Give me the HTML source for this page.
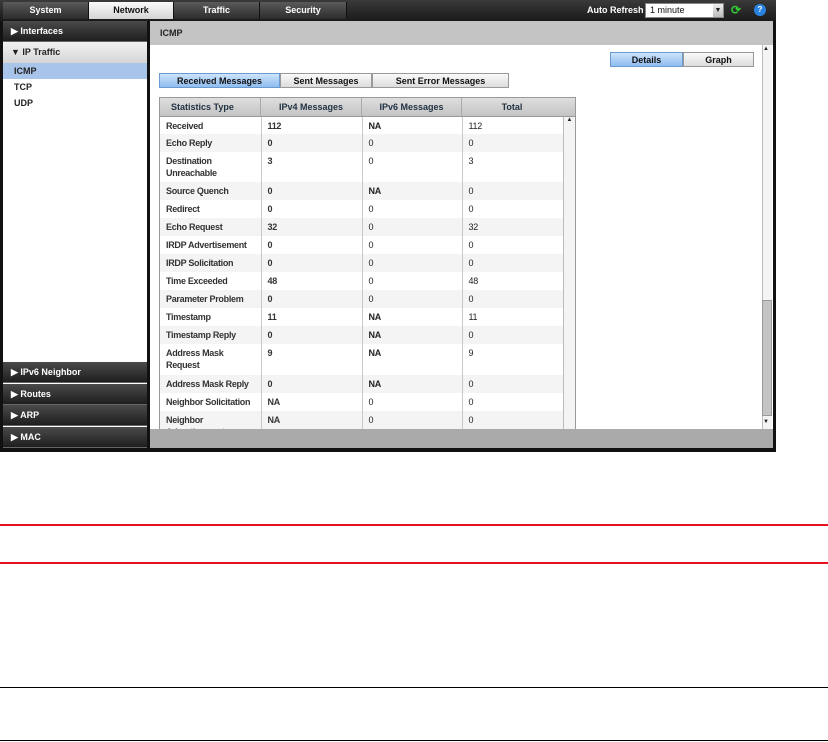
<!DOCTYPE html>
<html><head><meta charset="utf-8"><style>
*{margin:0;padding:0;box-sizing:border-box}
body{width:828px;height:742px;background:#fff;position:relative;font-family:"Liberation Sans",sans-serif;font-size:9px;color:#222;overflow:hidden}
.a{position:absolute}
.tab{position:absolute;top:2px;height:17px;color:#fff;font-weight:bold;text-align:center;line-height:17px;background:linear-gradient(#5a5a5a,#2c2c2c);border-right:1px solid #111}
.nav{position:absolute;left:3px;width:144px;height:21px;color:#fff;font-weight:bold;line-height:20px;padding-left:8px;background:linear-gradient(#4a4a4a,#1e1e1e);border-bottom:1px solid #666}
.btn{position:absolute;height:15px;line-height:14px;text-align:center;font-weight:bold;color:#111;border:1px solid #999;background:linear-gradient(#fafafa,#dcdcdc)}
.btn.on{background:linear-gradient(#cde3fb,#8fbdf0);border-color:#6a9ad0}
table{border-collapse:collapse;font-size:9px;table-layout:fixed}
td{vertical-align:top;padding:3px 4px 0 6px;border-right:1px solid #c8c8c8;line-height:12px;letter-spacing:-0.3px}
td:nth-child(1),td:nth-child(2){font-weight:bold;color:#333}
tr.s td{background:#f4f4f4}
</style></head><body>
<div class="a" style="left:0;top:0;width:776px;height:452px;background:#111"></div>
<div class="a" style="left:0;top:0;width:776px;height:21px;background:linear-gradient(#3a3a3a,#1a1a1a)"></div>
<div class="tab" style="left:3px;width:86px">System</div>
<div class="tab" style="left:89px;width:85px;background:linear-gradient(#fafafa,#d4d4d4);color:#111">Network</div>
<div class="tab" style="left:174px;width:86px">Traffic</div>
<div class="tab" style="left:260px;width:87px">Security</div>
<div class="a" style="left:587px;top:5px;color:#fff;font-weight:bold">Auto Refresh</div>
<div class="a" style="left:645px;top:3px;width:79px;height:15px;background:#fff;border:1px solid #888;padding-left:4px;line-height:13px;color:#111">1 minute</div>
<div class="a" style="left:713px;top:4px;width:10px;height:13px;background:linear-gradient(#eee,#bbb);text-align:center;font-size:7px;line-height:13px">▼</div>
<div class="a" style="left:731px;top:4px;color:#3c3;font-size:12px;line-height:12px;font-weight:bold">⟳</div>
<div class="a" style="left:754px;top:4px;width:12px;height:12px;border-radius:50%;background:#2a82e0;color:#fff;font-size:8px;text-align:center;line-height:12px;font-weight:bold">?</div>
<div class="a" style="left:3px;top:21px;width:144px;height:427px;background:#fff"></div>
<div class="nav" style="top:21px">▶ Interfaces</div>
<div class="a" style="left:3px;top:42px;width:144px;height:21px;background:linear-gradient(#f2f2f2,#d6d6d6);font-weight:bold;line-height:20px;padding-left:8px;color:#222">▼ IP Traffic</div>
<div class="a" style="left:3px;top:63px;width:144px;height:16px;background:#a8c4ea;padding-left:11px;line-height:16px;font-weight:bold">ICMP</div>
<div class="a" style="left:14px;top:82px;font-weight:bold">TCP</div>
<div class="a" style="left:14px;top:98px;font-weight:bold">UDP</div>
<div class="nav" style="top:362px">▶ IPv6 Neighbor</div>
<div class="nav" style="top:384px">▶ Routes</div>
<div class="nav" style="top:405px">▶ ARP</div>
<div class="nav" style="top:427px">▶ MAC</div>
<div class="a" style="left:150px;top:21px;width:623px;height:427px;background:#fff"></div>
<div class="a" style="left:150px;top:21px;width:623px;height:24px;background:#c4c4c4;padding-left:10px;line-height:24px;font-weight:bold">ICMP</div>
<div class="a" style="left:150px;top:429px;width:623px;height:19px;background:#aaa"></div>
<div class="a" style="left:762px;top:45px;width:10px;height:384px;background:#f4f4f4;border-left:1px solid #bbb"></div>
<div class="a" style="left:762px;top:300px;width:10px;height:116px;background:#c4c4c4;border:1px solid #999"></div>
<div class="a" style="left:763px;top:46px;font-size:6px">▲</div>
<div class="a" style="left:763px;top:419px;font-size:6px">▼</div>
<div class="btn on" style="left:610px;top:52px;width:73px">Details</div>
<div class="btn" style="left:683px;top:52px;width:71px">Graph</div>
<div class="btn on" style="left:159px;top:73px;width:121px">Received Messages</div>
<div class="btn" style="left:280px;top:73px;width:92px">Sent Messages</div>
<div class="btn" style="left:372px;top:73px;width:137px">Sent Error Messages</div>
<div class="a" style="left:159px;top:97px;width:417px;height:332px;overflow:hidden;border:1px solid #999;border-bottom:none">
<div style="height:19px;background:linear-gradient(#dedede,#c4c4c4);border-bottom:1px solid #999;display:flex;font-weight:bold;color:#234;line-height:18px">
<div style="width:101px;padding-left:11px;border-right:1px solid #aaa">Statistics Type</div>
<div style="width:101px;text-align:center;border-right:1px solid #aaa">IPv4 Messages</div>
<div style="width:100px;text-align:center;border-right:1px solid #aaa">IPv6 Messages</div>
<div style="width:100px;text-align:center">Total</div>
</div>
<table style="width:403px">
<colgroup><col style="width:101px"><col style="width:101px"><col style="width:100px"><col style="width:101px"></colgroup>
<tr style="height:17px"><td>Received</td><td>112</td><td><b>NA</b></td><td>112</td></tr>
<tr class="s" style="height:18px"><td>Echo Reply</td><td>0</td><td>0</td><td>0</td></tr>
<tr style="height:30px"><td>Destination Unreachable</td><td>3</td><td>0</td><td>3</td></tr>
<tr class="s" style="height:18px"><td>Source Quench</td><td>0</td><td><b>NA</b></td><td>0</td></tr>
<tr style="height:18px"><td>Redirect</td><td>0</td><td>0</td><td>0</td></tr>
<tr class="s" style="height:18px"><td>Echo Request</td><td>32</td><td>0</td><td>32</td></tr>
<tr style="height:18px"><td>IRDP Advertisement</td><td>0</td><td>0</td><td>0</td></tr>
<tr class="s" style="height:18px"><td>IRDP Solicitation</td><td>0</td><td>0</td><td>0</td></tr>
<tr style="height:18px"><td>Time Exceeded</td><td>48</td><td>0</td><td>48</td></tr>
<tr class="s" style="height:18px"><td>Parameter Problem</td><td>0</td><td>0</td><td>0</td></tr>
<tr style="height:18px"><td>Timestamp</td><td>11</td><td><b>NA</b></td><td>11</td></tr>
<tr class="s" style="height:18px"><td>Timestamp Reply</td><td>0</td><td><b>NA</b></td><td>0</td></tr>
<tr style="height:31px"><td>Address Mask Request</td><td>9</td><td><b>NA</b></td><td>9</td></tr>
<tr class="s" style="height:18px"><td style="white-space:nowrap">Address Mask Reply</td><td>0</td><td><b>NA</b></td><td>0</td></tr>
<tr style="height:18px"><td style="white-space:nowrap">Neighbor Solicitation</td><td>NA</td><td>0</td><td>0</td></tr>
<tr class="s" style="height:30px"><td>Neighbor Advertisement</td><td>NA</td><td>0</td><td>0</td></tr>
</table>
<div class="a" style="left:403px;top:19px;width:12px;height:313px;background:#f4f4f4;border-left:1px solid #bbb;font-size:6px;text-align:center">▲</div>
</div>
<div class="a" style="left:0;top:524px;width:828px;height:2px;background:#e8101e"></div>
<div class="a" style="left:0;top:562px;width:828px;height:2px;background:#e8101e"></div>
<div class="a" style="left:0;top:687px;width:828px;height:1px;background:#000"></div>
<div class="a" style="left:0;top:740px;width:828px;height:1px;background:#000"></div>
</body></html>
